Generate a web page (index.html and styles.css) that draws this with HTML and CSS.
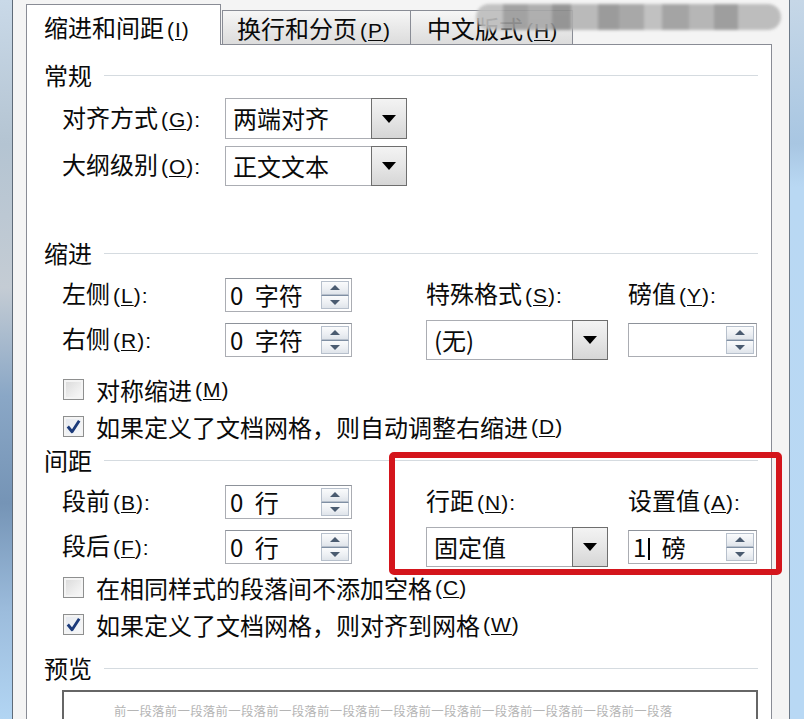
FILE: index.html
```html
<!DOCTYPE html>
<html lang="zh-CN">
<head>
    <meta charset="UTF-8">
    <title>段落</title>
    <link rel="stylesheet" href="styles.css">
</head>
<body>
    <div class="screen">
        <div class="edge edge-left"></div>

        <div class="dialog">
            <!-- 选项卡 -->
            <div class="tabs">
                <div class="tab active">缩进和间距<span class="key">(<u>I</u>)</span></div>
                <div class="tab">换行和分页<span class="key">(<u>P</u>)</span></div>
                <div class="tab">中文版式<span class="key">(<u>H</u>)</span></div>
            </div>

            <div class="panel">
                <!-- 常规 -->
                <div class="heading">常规<span class="rule"></span></div>
                <div class="row">
                    <span class="label">对齐方式<span class="key">(<u>G</u>):</span></span>
                    <div class="combo wide"><span class="value">两端对齐</span><span class="drop"></span></div>
                </div>
                <div class="row">
                    <span class="label">大纲级别<span class="key">(<u>O</u>):</span></span>
                    <div class="combo wide tall"><span class="value">正文文本</span><span class="drop"></span></div>
                </div>

                <!-- 缩进 -->
                <div class="heading gap-lg">缩进<span class="rule"></span></div>
                <div class="grid">
                    <span class="label">左侧<span class="key">(<u>L</u>):</span></span>
                    <div class="spin"><span class="value">0 字符</span><span class="arrows"><i class="up"></i><i class="down"></i></span></div>
                    <span class="label c3">特殊格式<span class="key">(<u>S</u>):</span></span>
                    <span class="label c4">磅值<span class="key">(<u>Y</u>):</span></span>

                    <span class="label">右侧<span class="key">(<u>R</u>):</span></span>
                    <div class="spin"><span class="value">0 字符</span><span class="arrows"><i class="up"></i><i class="down"></i></span></div>
                    <div class="combo c3 tall"><span class="value">(无)</span><span class="drop"></span></div>
                    <div class="spin c4"><span class="value"></span><span class="arrows"><i class="up"></i><i class="down"></i></span></div>
                </div>
                <div class="checks">
                    <div class="check"><span class="box"></span>对称缩进<span class="key">(<u>M</u>)</span></div>
                    <div class="check"><span class="box on"><svg viewBox="0 0 20 20"><path d="M4 10 L8.5 15.5 L16 4"/></svg></span>如果定义了文档网格，则自动调整右缩进<span class="key">(<u>D</u>)</span></div>
                </div>

                <!-- 间距 -->
                <div class="heading">间距<span class="rule"></span></div>
                <div class="grid">
                    <span class="label">段前<span class="key">(<u>B</u>):</span></span>
                    <div class="spin"><span class="value">0 行</span><span class="arrows"><i class="up"></i><i class="down"></i></span></div>
                    <span class="label c3">行距<span class="key">(<u>N</u>):</span></span>
                    <span class="label c4">设置值<span class="key">(<u>A</u>):</span></span>

                    <span class="label">段后<span class="key">(<u>F</u>):</span></span>
                    <div class="spin"><span class="value">0 行</span><span class="arrows"><i class="up"></i><i class="down"></i></span></div>
                    <div class="combo c3 tall"><span class="value">固定值</span><span class="drop"></span></div>
                    <div class="spin c4"><span class="value">1<span class="caret"></span> 磅</span><span class="arrows"><i class="up"></i><i class="down"></i></span></div>
                </div>
                <div class="checks tight">
                    <div class="check"><span class="box"></span>在相同样式的段落间不添加空格<span class="key">(<u>C</u>)</span></div>
                    <div class="check"><span class="box on"><svg viewBox="0 0 20 20"><path d="M4 10 L8.5 15.5 L16 4"/></svg></span>如果定义了文档网格，则对齐到网格<span class="key">(<u>W</u>)</span></div>
                </div>

                <!-- 预览 -->
                <div class="heading gap-sm">预览<span class="rule"></span></div>
                <div class="preview">
                    <p>前一段落前一段落前一段落前一段落前一段落前一段落前一段落前一段落前一段落前一段落前一段落</p>
                </div>

                <!-- 红色标注框 -->
                <div class="mark"></div>
            </div>
        </div>

        <div class="edge edge-right"></div>

        <!-- 水印(打码) -->
        <div class="watermark"></div>
    </div>
</body>
</html>
```

FILE: styles.css
```css
/* 颜色 */
:root {
    --frame: #f0f0f0;
    --tab-border: #898c95;
    --field-border: #abadb3;
    --rule: #d5dbe0;
    --mark: #d4151c;
    --text: #0a0a0a;
}

/* 基础 */
body {
    margin: 0;
    font-family: "Noto Sans CJK SC", "Noto Sans", sans-serif;
    font-size: 24px;
    line-height: 30px;
    color: var(--text);
    background: var(--frame);
}

.screen {
    position: relative;
    display: flex;
    width: 804px;
    height: 719px;
    overflow: hidden;
}

/* 窗口边框 */
.edge {
    flex: none;
}

.edge-left {
    width: 12px;
    border-right: 1px solid #5f6b78;
    background: linear-gradient(180deg, #c9d9e8 0%, #b4c4d2 20%, #c4ccd4 40%, #8aa7c6 55%, #7594b6 70%, #9cbcdc 85%, #b2d5f3 100%);
}

.edge-right {
    width: 14px;
    border-left: 1px solid #6d7a88;
    background: linear-gradient(180deg, #c6d7e7 0%, #a8c6e2 20%, #b9d8f3 26%, #b8d8f4 100%);
}

.dialog {
    flex: 1;
    display: flex;
    flex-direction: column;
    padding: 0 17px 0 13px;
    background: #f4f4f4;
}

/* 选项卡 */
.tabs {
    display: flex;
    align-items: flex-end;
    height: 44px;
    flex: none;
}

.tab {
    height: 33px;
    padding: 0 0 0 14px;
    border: 1px solid var(--tab-border);
    border-bottom: none;
    background: linear-gradient(180deg, #f6f6f6 0%, #e9e9e9 50%, #dcdcdc 100%);
    white-space: nowrap;
    line-height: 34px;
}

.tab + .tab {
    margin-left: -1px;
}

.tab:nth-child(2) {
    width: 173px;
    margin-left: 1px;
}

.tab:nth-child(3) {
    width: 145px;
    padding-left: 16px;
}

.tab.active {
    position: relative;
    z-index: 2;
    width: 176px;
    height: 40px;
    margin-bottom: -1px;
    padding-left: 17px;
    background: #fff;
    line-height: 44px;
}

.key {
    font-family: "Liberation Sans", sans-serif;
    font-size: 21px;
    padding-left: 3px;
    letter-spacing: 1px;
}

.key u {
    text-decoration-thickness: 1px;
    text-underline-offset: 2px;
}

/* 面板 */
.panel {
    position: relative;
    flex: 1;
    padding: 15px 13px 0 17px;
    border: 1px solid var(--tab-border);
    border-bottom: none;
    background: #fff;
}

.heading {
    display: flex;
    align-items: center;
    height: 30px;
}

.rule {
    flex: 1;
    height: 1px;
    margin-left: 12px;
    background: var(--rule);
}

.gap-lg {
    margin-top: 49px;
}

.gap-sm {
    margin-top: 10px;
}

.row {
    display: flex;
    align-items: center;
    height: 47px;
    padding-left: 18px;
}

.heading + .row {
    margin-top: 5px;
}

.label {
    width: 163px;
    white-space: nowrap;
}

.grid {
    display: grid;
    grid-template-columns: 163px 127px 74px 182px 20px 129px;
    grid-auto-rows: 45px;
    align-items: center;
    margin-top: 4px;
    padding-left: 18px;
}

.grid .label {
    width: auto;
}

.c3 {
    grid-column: 4;
}

.c4 {
    grid-column: 6;
}

/* 下拉框 */
.combo {
    display: flex;
    height: 38px;
    border: 1px solid var(--field-border);
    box-sizing: border-box;
    background: #fff;
}

.combo.wide {
    width: 182px;
    height: 41px;
}

.combo.tall {
    height: 40px;
}

.combo .value {
    flex: 1;
    padding-left: 7px;
    line-height: 38px;
}

.drop {
    position: relative;
    width: 34px;
    margin: -1px -1px -1px 0;
    border: 1px solid #6e6e6e;
    background: linear-gradient(180deg, #f3f3f3 0%, #e6e6e6 50%, #d6d6d6 100%);
}

.drop::after {
    content: "";
    position: absolute;
    left: 50%;
    top: 50%;
    margin: -4px 0 0 -7px;
    border-left: 7px solid transparent;
    border-right: 7px solid transparent;
    border-top: 8px solid #000;
}

/* 数值框 */
.spin {
    display: flex;
    height: 34px;
    border: 1px solid var(--field-border);
    border-top-color: #8d929a;
    box-sizing: border-box;
    background: #fff;
}

.spin .value {
    flex: 1;
    padding-left: 4px;
    line-height: 32px;
    white-space: pre;
    word-spacing: 6px;
}

.caret {
    display: inline-block;
    width: 2px;
    height: 22px;
    margin-left: 2px;
    vertical-align: -3px;
    background: #000;
}

.arrows {
    display: flex;
    flex-direction: column;
    width: 28px;
    margin: 2px 2px 2px 0;
}

.arrows i {
    position: relative;
    flex: 1;
    border: 1px solid #b7c0cc;
    background: linear-gradient(180deg, #fafbfc 0%, #eceff3 60%, #dfe4ea 100%);
}

.arrows i + i {
    border-top: 1px solid #7f8fa3;
}

.arrows i::after {
    content: "";
    position: absolute;
    left: 50%;
    top: 50%;
    margin-left: -5px;
    border-left: 5px solid transparent;
    border-right: 5px solid transparent;
}

.arrows .up::after {
    margin-top: -3px;
    border-bottom: 5px solid #4a5b70;
}

.arrows .down::after {
    margin-top: -2px;
    border-top: 5px solid #4a5b70;
}

/* 复选框 */
.checks {
    margin-top: 9px;
    padding-left: 19px;
}

.checks.tight {
    margin-top: 0;
}

.check {
    display: flex;
    align-items: center;
    height: 37px;
    white-space: nowrap;
}

.box {
    flex: none;
    width: 19px;
    height: 19px;
    margin-right: 12px;
    border: 1px solid #8e8f8f;
    background: linear-gradient(135deg, #d8d8d8 0%, #eeeeee 60%, #fafafa 100%);
    box-shadow: inset 0 0 0 2px #f4f4f4;
}

.box.on {
    background: linear-gradient(135deg, #e4e8ee 0%, #f7f9fb 100%);
}

.box svg {
    display: block;
    width: 19px;
    height: 19px;
}

.box path {
    fill: none;
    stroke: #1b3a7a;
    stroke-width: 3;
    stroke-linejoin: round;
}

/* 预览 */
.preview {
    height: 60px;
    margin: 7px 0 0 18px;
    border: 2px solid #666;
    border-bottom: none;
}

.preview p {
    margin: 12px 0 0 50px;
    font-size: 12.4px;
    line-height: 14px;
    letter-spacing: 0.3px;
    color: #b5b5b5;
    white-space: nowrap;
}

/* 红色标注 */
.mark {
    position: absolute;
    left: 362px;
    top: 407px;
    width: 381px;
    height: 111px;
    border: 6px solid var(--mark);
    border-radius: 5px;
}

/* 水印 */
.watermark {
    position: absolute;
    left: 476px;
    top: 4px;
    width: 305px;
    height: 26px;
    border-radius: 13px;
    background: linear-gradient(90deg,
        #bdbdbd 0, #bdbdbd 9%, #9a9a9a 9%, #9a9a9a 17%, #a8a8a8 17%, #a8a8a8 25%,
        #8c8c8c 25%, #8c8c8c 31%, #b4b4b4 31%, #b4b4b4 40%, #929292 40%, #929292 47%,
        #a0a0a0 47%, #a0a0a0 55%, #bcbcbc 55%, #bcbcbc 61%, #9c9c9c 61%, #9c9c9c 70%,
        #b0b0b0 70%, #b0b0b0 78%, #959595 78%, #959595 86%, #b8b8b8 86%, #b8b8b8 100%);
    filter: blur(1.5px);
    opacity: 0.9;
}
```
